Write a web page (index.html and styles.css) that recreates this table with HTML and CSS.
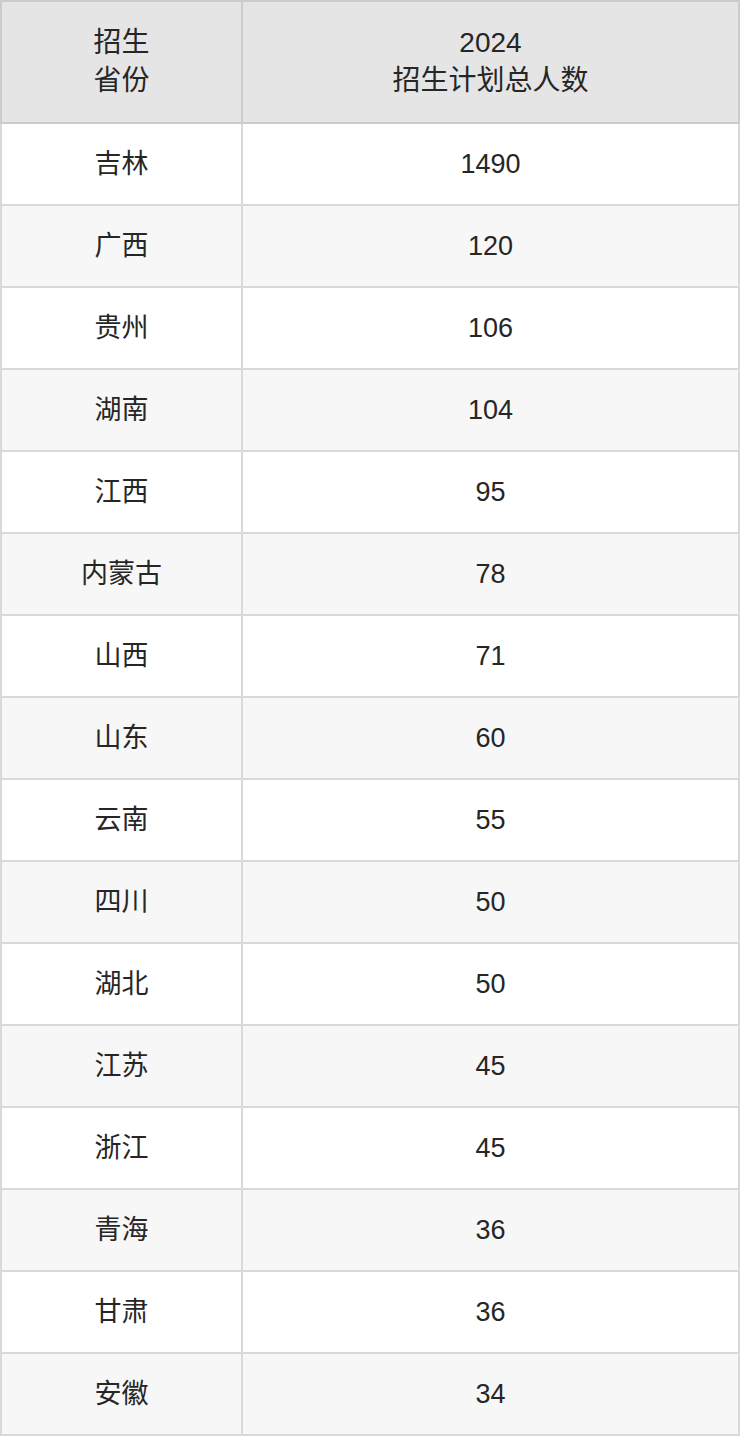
FILE: index.html
```html
<!DOCTYPE html>
<html lang="zh">
<head>
<meta charset="utf-8">
<link rel="stylesheet" href="styles.css">
</head>
<body>
<table class="plan">
  <thead>
    <tr><th class="c1">招生<br>省份</th><th class="c2">2024<br>招生计划总人数</th></tr>
  </thead>
  <tbody>
    <tr><td>吉林</td><td>1490</td></tr>
    <tr><td>广西</td><td>120</td></tr>
    <tr><td>贵州</td><td>106</td></tr>
    <tr><td>湖南</td><td>104</td></tr>
    <tr><td>江西</td><td>95</td></tr>
    <tr><td>内蒙古</td><td>78</td></tr>
    <tr><td>山西</td><td>71</td></tr>
    <tr><td>山东</td><td>60</td></tr>
    <tr><td>云南</td><td>55</td></tr>
    <tr><td>四川</td><td>50</td></tr>
    <tr><td>湖北</td><td>50</td></tr>
    <tr><td>江苏</td><td>45</td></tr>
    <tr><td>浙江</td><td>45</td></tr>
    <tr><td>青海</td><td>36</td></tr>
    <tr><td>甘肃</td><td>36</td></tr>
    <tr><td>安徽</td><td>34</td></tr>
  </tbody>
</table>
</body>
</html>
```
FILE: styles.css
```css
html, body {
  margin: 0;
  padding: 0;
  background: #ffffff;
}
.plan {
  width: 740px;
  border-collapse: collapse;
  table-layout: fixed;
  font-family: "Liberation Sans", Arial, "Noto Sans CJK SC", sans-serif;
  font-size: 27px;
  color: #262626;
}
.plan th, .plan td {
  border: 2px solid #d9d9d9;
  text-align: center;
  vertical-align: middle;
  padding: 0;
}
.plan th {
  background: #e5e5e5;
  border-color: #cccccc;
  font-weight: normal;
  font-size: 28px;
  height: 120px;
  line-height: 38px;
}
.plan .c1 {
  width: 239px;
}
.plan td {
  height: 80px;
  line-height: 38px;
}
.plan tbody tr:nth-child(even) td {
  background: #f7f7f7;
}
```
